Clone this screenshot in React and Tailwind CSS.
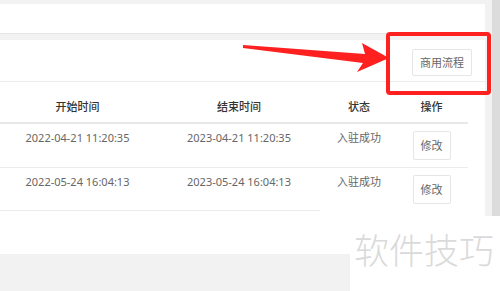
const rows = [
  { start: "2022-04-21 11:20:35", end: "2023-04-21 11:20:35", status: "入驻成功", h: "h-[44px]", border: true },
  { start: "2022-05-24 16:04:13", end: "2023-05-24 16:04:13", status: "入驻成功", h: "h-[42px]", border: false },
]

const App = () => {
  return (
    <div
      className="relative w-[500px] h-[291px] overflow-hidden bg-[#f2f2f2]"
      style={{ fontFamily: '"Noto Sans", "Noto Sans CJK SC", sans-serif' }}
    >
      <div className="flex">
        {/* content column */}
        <div className="w-[485px] pt-[4px]">
          <div className="h-[30px] bg-white border-b border-[#e6e6e6]"></div>
          <div className="mt-[6px] h-[214px] bg-white">
            {/* toolbar */}
            <div className="h-[42px] border-b border-[#ebebeb] flex justify-end items-start pt-[9px] pr-[13px]">
              <button className="h-[27px] w-[60px] border border-[#e6e6e6] rounded-[2px] bg-white text-[11px] text-[#666] leading-none">
                商用流程
              </button>
            </div>

            {/* table */}
            <div className="w-[468px]">
              <div className="flex h-[42px] border-b-2 border-[#e8e8e8] text-[11px] leading-[16px] text-[#333] font-medium">
                <div className="w-[155px] pt-[17px] text-center">开始时间</div>
                <div className="w-[168px] pt-[17px] text-center">结束时间</div>
                <div className="w-[72px] pt-[17px] text-center">状态</div>
                <div className="w-[73px] pt-[17px] text-center">操作</div>
              </div>
              {rows.map((r, i) => (
                <div
                  key={i}
                  className={`flex items-start ${r.h} text-[11px] leading-[16px] text-[#666] ${r.border ? "border-b border-[#ebebeb]" : ""}`}
                >
                  <div className="w-[155px] pt-[6px] text-center">{r.start}</div>
                  <div className="w-[168px] pt-[6px] text-center">{r.end}</div>
                  <div className="w-[72px] pt-[6px] text-center">{r.status}</div>
                  <div className="w-[73px] pt-[7px] flex justify-center">
                    <button className="h-[29px] w-[38px] border border-[#e6e6e6] rounded-[2px] bg-white text-[11px] text-[#666] leading-none">
                      修改
                    </button>
                  </div>
                </div>
              ))}
              <div className="w-[320px] h-px bg-[#ebebeb]"></div>
            </div>
          </div>
        </div>
        {/* scrollbar */}
        <div className="ml-[7px] w-[8px] h-[216px] bg-[#dcdcdc]"></div>
      </div>

      {/* watermark */}
      <div className="absolute left-[350px] top-[216px] w-[150px] h-[75px] bg-white pt-[17px] pl-[4px]">
        <span className="text-[35px] leading-none font-light text-[#dadada] whitespace-nowrap">软件技巧</span>
      </div>

      {/* annotation */}
      <div className="absolute left-[386px] top-[32px] w-[105px] h-[63px] border-4 border-[#ff2020] rounded-[4px]"></div>
      <svg className="absolute left-0 top-0" width="500" height="291" viewBox="0 0 500 291">
        <polygon
          points="243,45 365,54 362,43 389,58 357,72 363,63 243,48"
          fill="#ff2020"
        />
      </svg>
    </div>
  )
}

export default App
